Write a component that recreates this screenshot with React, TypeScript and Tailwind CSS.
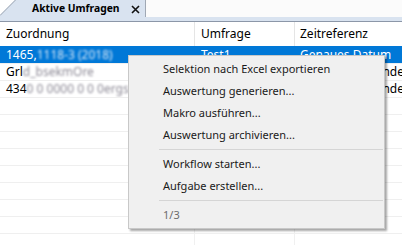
import React from "react";

const font = { fontFamily: '"Noto Sans", "Open Sans", sans-serif' };

function Row({
  selected,
  c1,
  blur1,
  c2,
  c3,
}: {
  selected?: boolean;
  c1: string;
  blur1: string;
  c2: string;
  c3: string;
}) {
  return (
    <div
      className={`flex h-[17px] border-t text-[12px] leading-[16px] ${
        selected ? "bg-[#0078d7] border-[#0078d7] text-white" : "border-[#efefef] text-black"
      }`}
    >
      <div className={`w-[195px] shrink-0 pl-[6px] whitespace-nowrap overflow-hidden ${selected ? "" : "border-r border-[#f0f0f0]"}`}>
        {c1}
        <span className={`blur-[1.2px] ${selected ? "text-[#dbe9f7]" : "text-[#8d8a96]"}`}>{blur1}</span>
      </div>
      <div className={`w-[100px] shrink-0 pl-[6px] whitespace-nowrap overflow-hidden ${selected ? "" : "border-r border-[#f0f0f0]"}`}>
        {c2}
      </div>
      <div className="flex-1 pl-[5px] whitespace-nowrap overflow-hidden">{c3}</div>
    </div>
  );
}

function EmptyRow() {
  return (
    <div className="flex h-[17px] border-t border-[#efefef]">
      <div className="w-[195px] shrink-0 border-r border-[#f0f0f0]" />
      <div className="w-[100px] shrink-0 border-r border-[#f0f0f0]" />
      <div className="flex-1" />
    </div>
  );
}

function MenuItem({ label, muted }: { label: string; muted?: boolean }) {
  return (
    <div
      className={`h-[22px] flex items-center pl-[34px] text-[11px] whitespace-nowrap ${
        muted ? "text-[#6d6d6d]" : "text-[#1a1a1a]"
      }`}
    >
      {label}
    </div>
  );
}

function Sep() {
  return (
    <div className="py-[3px] pl-[30px] pr-[1px]">
      <div className="h-px bg-[#d5d5d5]" />
    </div>
  );
}

export default function App() {
  return (
    <div className="relative w-[402px] h-[245px] overflow-hidden bg-white" style={font}>
      {/* Tab strip */}
      <div className="relative flex h-[17px] bg-white">
        <div className="relative w-[145px] shrink-0 h-[17px] bg-[#d9e3f0] [clip-path:polygon(15px_0,100%_0,100%_100%,0_100%,0_15px)]">
          <div className="flex items-center h-full pl-[32px] gap-[12px] whitespace-nowrap">
            <span className="text-[10.3px] font-bold text-black leading-none">Aktive Umfragen</span>
            <svg width="9" height="9" viewBox="0 0 9 9" className="mt-[1px] shrink-0">
              <path d="M1 1 L8 8 M8 1 L1 8" stroke="#111" strokeWidth="1.6" />
            </svg>
          </div>
        </div>
        <svg className="absolute left-0 top-0" width="17" height="17" viewBox="0 0 17 17">
          <line x1="0" y1="15.5" x2="15.5" y2="0" stroke="#9aa3b0" strokeWidth="1" />
        </svg>
        <div className="flex-1 h-[17px] border-l border-[#a0a8b4] bg-[#fbfbfb]" />
      </div>
      <div className="h-[4px] bg-[#d9e3f0]" />
      <div className="h-px bg-[#8c97a8]" />

      {/* Grid */}
      <div className="flex">
        <div className="w-[2px] bg-white" />
        <div className="w-px bg-[#a9b6ca]" />
        <div className="flex-1">
          <div className="flex h-[24px] text-[12px] text-black">
            <div className="w-[195px] shrink-0 pl-[6px] flex items-center border-r border-[#e5e5e5]">Zuordnung</div>
            <div className="w-[100px] shrink-0 pl-[6px] flex items-center border-r border-[#e5e5e5]">Umfrage</div>
            <div className="flex-1 pl-[5px] flex items-center">Zeitreferenz</div>
          </div>
          <Row selected c1="1465," blur1="1118-3 (2018)" c2="Test1" c3="Genaues Datum" />
          <Row c1="Grl" blur1="d_bsekmOre" c2="Test1" c3="Zeitraum laufende Woche" />
          <Row c1="434" blur1="0 0 0000 0 0 0ergsstic" c2="Test1" c3="Zeitraum laufende Woche" />
          {Array.from({ length: 10 }).map((_, i) => (
            <EmptyRow key={i} />
          ))}
        </div>
      </div>

      {/* Context menu */}
      <div className="absolute left-[128px] top-[55px] w-[257px] bg-[#f0f0f0] border border-[#c8c8c8] py-[2px] shadow-[2px_2px_2px_rgba(0,0,0,0.35)]">
        <MenuItem label="Selektion nach Excel exportieren" />
        <MenuItem label="Auswertung generieren..." />
        <MenuItem label="Makro ausführen..." />
        <MenuItem label="Auswertung archivieren..." />
        <Sep />
        <MenuItem label="Workflow starten..." />
        <MenuItem label="Aufgabe erstellen..." />
        <Sep />
        <MenuItem label="1/3" muted />
      </div>
    </div>
  );
}
